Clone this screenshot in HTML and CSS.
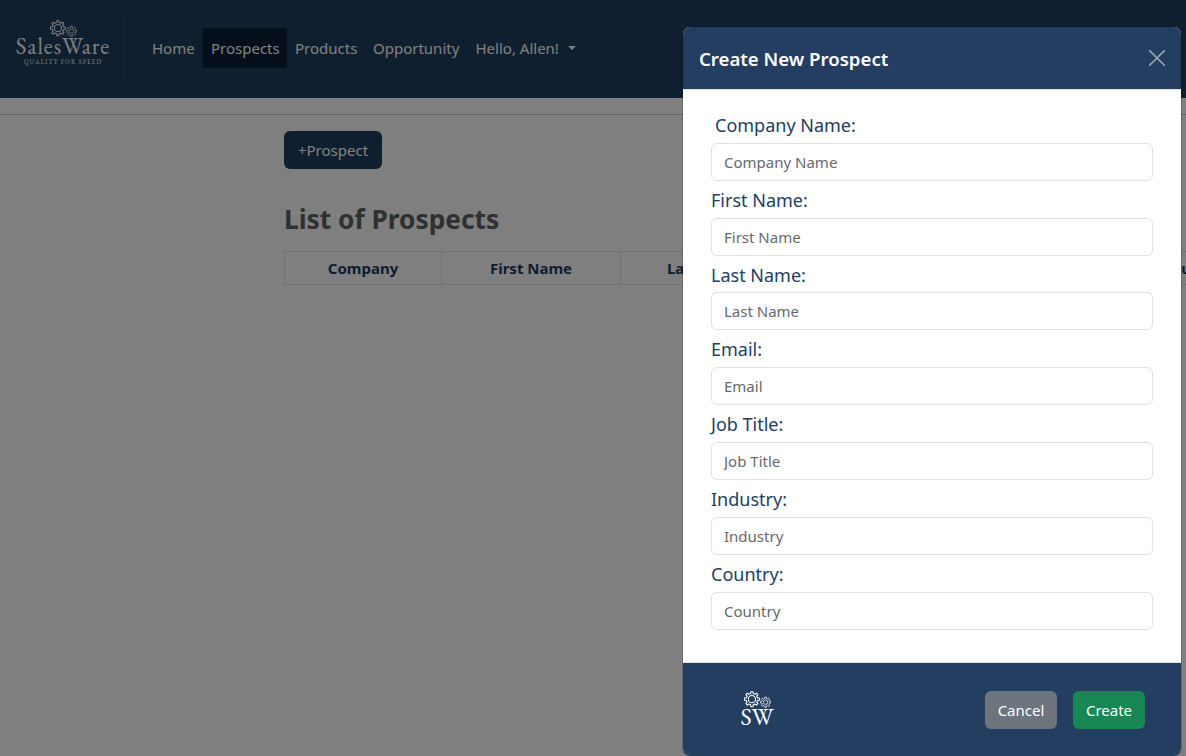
FILE: index.html
```html
<!DOCTYPE html>
<html lang="en">
<head>
<meta charset="utf-8">
<title>Prospects</title>
<link rel="stylesheet" href="styles.css">
</head>
<body>
<svg class="defs" width="0" height="0">
  <symbol id="gears" viewBox="2.5 1 49.5 30">
    <g fill="none" stroke="currentColor">
      <g stroke-width="2" stroke-linejoin="round">
        <path d="M14.6 5.2 15 1.8H19L19.4 5.2 22.6 6.6 25.2 4.4 28 7.2 25.9 9.9 27.2 13 30.6 13.4V17.4L27.2 17.8 25.9 21 28 23.6 25.2 26.4 22.6 24.3 19.4 25.6 19 29.2H15L14.6 25.6 11.4 24.3 8.8 26.4 6 23.6 8.1 21 6.8 17.8 3.4 17.4V13.4L6.8 13 8.1 9.9 6 7.2 8.8 4.4 11.4 6.6Z"/>
        <circle cx="17" cy="15.4" r="6.6"/>
      </g>
      <g stroke-width="1.4" stroke-linejoin="round">
        <path d="M40.4 14 40.7 11.6H43.3L43.6 14 45.8 14.9 47.7 13.4 49.6 15.3 48.1 17.2 49 19.4 51.4 19.7V22.3L49 22.6 48.1 24.8 49.6 26.7 47.7 28.6 45.8 27.1 43.6 28 43.3 30.4H40.7L40.4 28 38.2 27.1 36.3 28.6 34.4 26.7 35.9 24.8 35 22.6 32.6 22.3V19.7L35 19.4 35.9 17.2 34.4 15.3 36.3 13.4 38.2 14.9Z"/>
        <circle cx="42" cy="21" r="4"/>
      </g>
    </g>
  </symbol>
</svg>

<header class="navbar">
  <div class="brand">
    <svg class="brand-gears"><use href="#gears"/></svg>
    <span class="brand-name">SalesWare</span>
    <span class="brand-tag">QUALITY FOR SPEED</span>
  </div>
  <nav class="nav">
    <a class="link home">Home</a>
    <a class="link prospects active">Prospects</a>
    <a class="link products">Products</a>
    <a class="link opportunity">Opportunity</a>
    <a class="link user">Hello, Allen!<span class="caret"></span></a>
  </nav>
</header>
<hr class="rule">
<main class="content">
  <button class="btn btn-add">+Prospect</button>
  <h1 class="title">List of Prospects</h1>
  <div class="table">
    <div class="th">Company</div>
    <div class="th">First Name</div>
    <div class="th">Last Name</div>
    <div class="th">Email</div>
    <div class="th">Job Title</div>
    <div class="th">Country</div>
  </div>
</main>

<div class="backdrop"></div>
<section class="modal">
  <div class="modal-header">
    <h2 class="modal-title">Create New Prospect</h2>
    <svg class="close" viewBox="0 0 16 16"><path d="M.7.7 15.3 15.3M15.3.7.7 15.3" stroke="currentColor" stroke-width="1.6" stroke-linecap="round"/></svg>
  </div>
  <form class="modal-body">
    <label class="label first">Company Name:</label>
    <input class="input" placeholder="Company Name">
    <label class="label">First Name:</label>
    <input class="input" placeholder="First Name">
    <label class="label">Last Name:</label>
    <input class="input" placeholder="Last Name">
    <label class="label">Email:</label>
    <input class="input" placeholder="Email">
    <label class="label">Job Title:</label>
    <input class="input" placeholder="Job Title">
    <label class="label">Industry:</label>
    <input class="input" placeholder="Industry">
    <label class="label">Country:</label>
    <input class="input" placeholder="Country">
  </form>
  <div class="modal-footer">
    <div class="mark">
      <svg class="mark-gears"><use href="#gears"/></svg>
      <span class="mark-text">SW</span>
    </div>
    <div class="actions">
      <button class="btn btn-cancel">Cancel</button>
      <button class="btn btn-create">Create</button>
    </div>
  </div>
</section>
</body>
</html>
```

FILE: styles.css
```css
* { box-sizing: border-box; }
body {
  margin: 0;
  height: 756px;
  overflow: hidden;
  position: relative;
  background: #fff;
  font: 15px/24px "Noto Sans", "Open Sans", sans-serif;
}
.defs { position: absolute; }

.navbar { display: flex; align-items: center; height: 98px; background: #203e5e; color: #fff; }
.brand {
  width: 128px;
  height: 74px;
  padding: 8px 1px 0 0;
  display: flex;
  flex-direction: column;
  align-items: center;
  border-right: 1px solid #1c3855;
  font-family: "EB Garamond", "Liberation Serif", serif;
}
.brand-gears { width: 27px; height: 17px; flex: none; }
.brand-name { font-size: 23px; line-height: 18px; letter-spacing: .9px; }
.brand-tag { font-size: 6.2px; line-height: 8px; letter-spacing: 1.1px; margin-top: 3px; }
.nav { display: flex; margin: 0 0 2px 16px; }
.link { height: 40px; padding: 8px 0 8px 8px; white-space: nowrap; }
.home { width: 59px; }
.prospects { width: 84px; }
.products { width: 78px; }
.opportunity { width: 102.5px; }
.active { background: #081e36; }
.caret {
  display: inline-block;
  margin-left: 9.5px;
  vertical-align: 4px;
  border: 4.5px solid transparent;
  border-top-color: #fff;
  border-bottom: 0;
}
.rule { margin: 16px 0; border: 0; border-top: 1px solid #c8c9ca; }

.content { padding-left: 284px; overflow: hidden; }
.btn {
  display: block;
  height: 38px;
  padding: 0;
  border: 0;
  border-radius: 6px;
  color: #fff;
  font: inherit;
}
.btn-add { width: 98px; background: #203e5e; }
.title { margin: 33px 0 15px; font-size: 26.3px; line-height: 34px; color: #5e6064; font-weight: 700; }
.table {
  display: grid;
  grid-template-columns: 157px 179px 173px 178px 141px 160px;
  width: 990px;
  border: 1px solid #dee2e6;
}
.th { height: 32px; line-height: 33px; text-align: center; font-weight: 700; color: #1b3b60; border-right: 1px solid #dee2e6; }

.backdrop { position: absolute; inset: 0; background: rgba(0, 0, 0, .5); }
.modal {
  position: absolute;
  left: 682px;
  top: 26px;
  width: 500px;
  height: 731px;
  border: 1px solid rgba(0, 0, 0, .176);
  border-radius: 8px;
  background: #fff;
  background-clip: padding-box;
  overflow: hidden;
  display: flex;
  flex-direction: column;
}
.modal-header {
  height: 63px;
  flex: none;
  padding: 0 16px;
  display: flex;
  align-items: center;
  justify-content: space-between;
  background: #233e61;
  border-bottom: 1px solid #dee2e6;
  color: #fff;
}
.modal-title { margin: 2px 0 0; font-size: 18.6px; font-weight: 600; }
.close { width: 16px; height: 16px; color: #a0abb9; }
.modal-body { flex: 1; padding: 21px 28px 0; display: flex; flex-direction: column; }
.label { height: 28.8px; line-height: 28.8px; font-size: 18px; color: #233e61; margin-bottom: 3px; }
.first { padding-left: 4px; }
.input {
  height: 38px;
  flex: none;
  margin: 0 0 5px;
  padding: 0 12px;
  border: 1px solid #dee2e6;
  border-radius: 6px;
  font: inherit;
}
.input::placeholder { color: #66696d; opacity: 1; }
.modal-footer {
  height: 94px;
  flex: none;
  border-top: 1px solid #dee2e6;
  background: #233e61;
  color: #fff;
  display: flex;
  align-items: center;
  justify-content: space-between;
  padding: 0 36px 0 56px;
}
.mark { display: flex; flex-direction: column; align-items: center; width: 36px; margin-top: -4px; }
.mark-gears { width: 27px; height: 17px; }
.mark-text { font: 24px/17px "EB Garamond", "Liberation Serif", serif; }
.actions { display: flex; gap: 16px; }
.actions .btn { width: 72px; }
.btn-cancel { background: #6c757d; }
.btn-create { background: #198754; }
```
